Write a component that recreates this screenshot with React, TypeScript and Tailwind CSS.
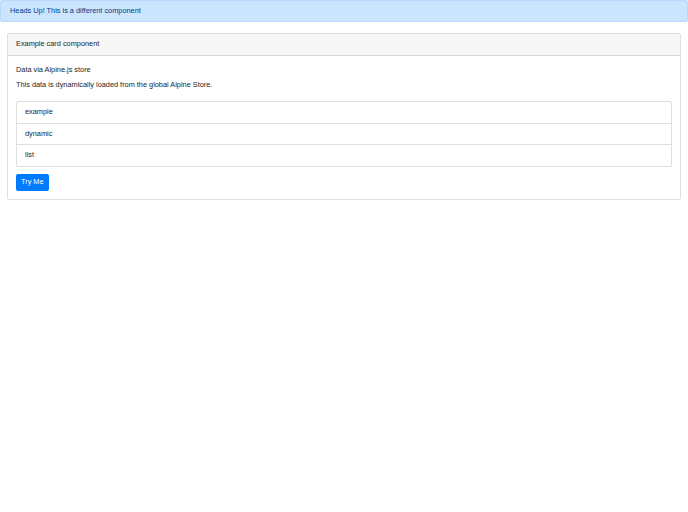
const items = ['example', 'dynamic', 'list'];

export default function App() {
    return (
        <div className="min-h-[512px] bg-white text-[#212529] text-[7.35px] leading-[10.8px]" style={{ fontFamily: '"Liberation Sans", Arial, sans-serif' }}>
            <div className="h-[22px] flex items-center px-[9px] bg-[#cce5ff] border border-[#b8daff] rounded-[2px] text-[#004085]">
                Heads Up! This is a different component
            </div>
            <div className="px-[7px] pt-[11px]">
                <div className="border border-black/[0.125] rounded-[2px]">
                    <div className="h-[22px] flex items-center px-[8px] bg-[#f7f7f7] border-b border-black/[0.125]">
                        Example card component
                    </div>
                    <div className="px-[8px] pt-[9px] pb-[8px]">
                        <div className="mb-[4px]">Data via Alpine.js store</div>
                        <p className="mb-[10px]">This data is dynamically loaded from the global Alpine Store.</p>
                        <ul className="border border-black/[0.125] rounded-[2px]">
                            {items.map((it, i) => (
                                <li key={it} className={`h-[21.33px] flex items-center px-[8px] ${i > 0 ? 'border-t border-black/[0.125]' : ''}`}>{it}</li>
                            ))}
                        </ul>
                        <button className="mt-[7px] h-[17px] px-[5px] bg-[#007bff] text-white rounded-[2px]">Try Me</button>
                    </div>
                </div>
            </div>
        </div>
    );
}
